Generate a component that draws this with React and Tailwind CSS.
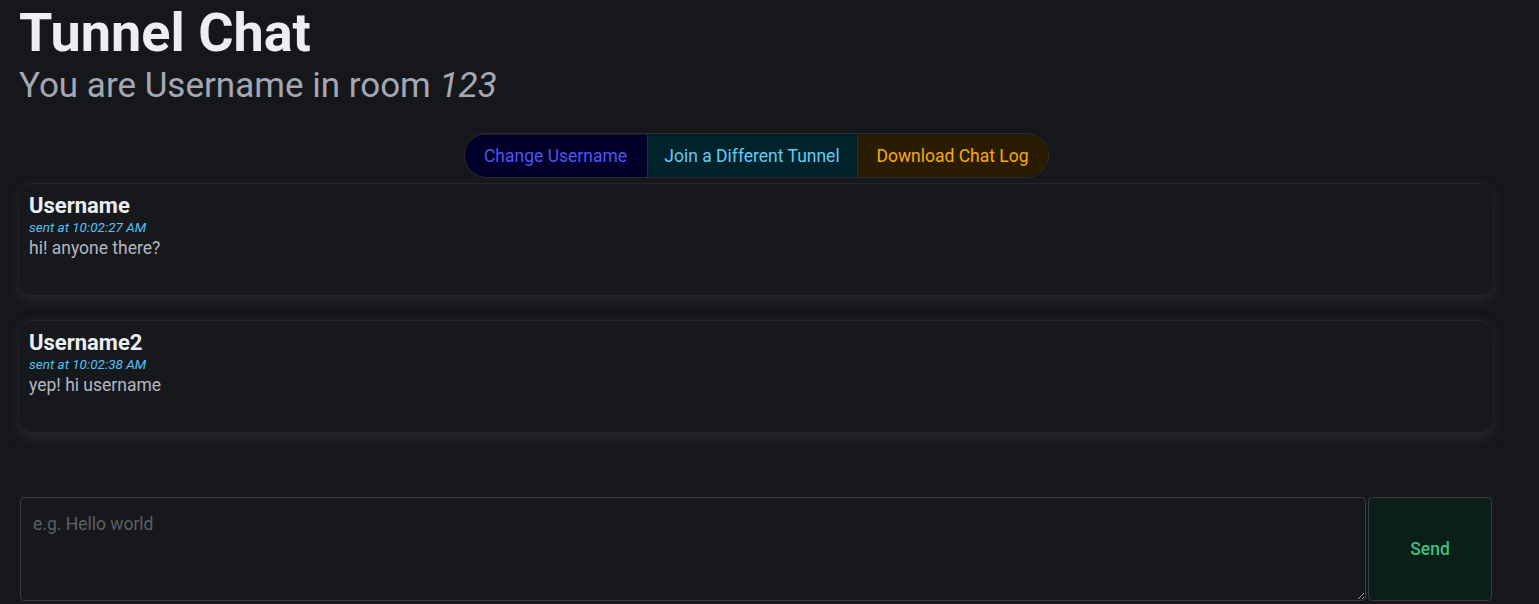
import React from "react";

const font = { fontFamily: "Roboto, 'Noto Sans', sans-serif" };

function Message({ name, time, text }) {
  return (
    <div className="h-[112px] rounded-xl bg-[#17181c] border-t border-[#24262b] px-[9px] pt-[9px] shadow-[0_6px_14px_rgba(60,62,70,0.45)]">
      <div className="text-[22px] font-bold leading-[26px] text-[#eceef2]">{name}</div>
      <div className="text-[13.5px] italic leading-[16px] text-[#4fc3f7]">sent at {time}</div>
      <div className="text-[17.5px] leading-[26px] text-[#b4b7c0]">{text}</div>
    </div>
  );
}

export default function App() {
  return (
    <div className="min-h-[604px] bg-[#16171b] overflow-hidden" style={font}>
      <div className="ml-[20px] w-[1472px]">
        <h1 className="text-[54px] font-bold leading-[62px] text-[#eceef2] ml-[-1px] pt-[2px]">Tunnel Chat</h1>
        <div className="text-[35px] leading-[40px] text-[#a4a8b4] ml-[-1px] pt-[2px]">
          You are Username in room <i>123</i>
        </div>
        <div className="mt-[27px] flex justify-center">
          <div className="flex h-[45px] rounded-full border border-[#2c2e33] overflow-hidden text-[17.5px] leading-[20px] pt-[1px]">
            <button className="w-[182px] bg-[#02002a] text-[#4c55ee]">Change Username</button>
            <button className="w-[210px] bg-[#00222d] text-[#62cdf0] border-l border-[#2c2e33]">Join a Different Tunnel</button>
            <button className="w-[191px] bg-[#2a1c00] text-[#f5aa10] border-l border-[#2c2e33]">Download Chat Log</button>
          </div>
        </div>
        <div className="mt-[5px] flex flex-col gap-[25px]">
          <Message name="Username" time="10:02:27 AM" text="hi! anyone there?" />
          <Message name="Username2" time="10:02:38 AM" text="yep! hi username" />
        </div>
        <div className="mt-[65px] flex gap-[2px]">
          <textarea
            placeholder="e.g. Hello world"
            className="flex-1 h-[104px] rounded-[4px] border border-[#373a40] bg-[#17181c] px-[12px] py-[13px] text-[17.5px] text-[#c1c2c5] placeholder:text-[#5c5f66] outline-none"
          />
          <button className="w-[124px] h-[104px] rounded-[4px] border border-[#373a40] bg-[#0b1f18] text-[17.5px] font-medium text-[#3fbf7f]">Send</button>
        </div>
      </div>
    </div>
  );
}
